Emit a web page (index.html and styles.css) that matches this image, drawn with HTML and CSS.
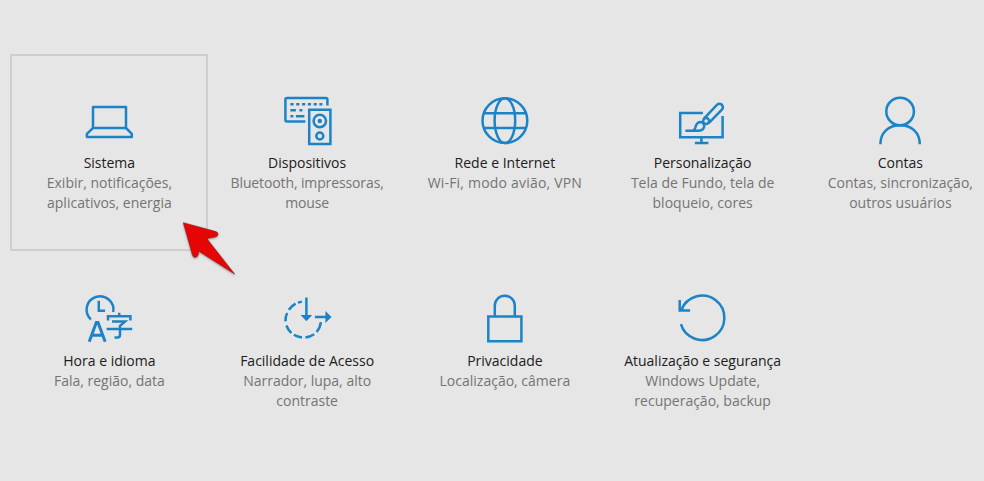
FILE: index.html
```html
<!DOCTYPE html>
<html lang="pt-BR">
<head>
    <meta charset="UTF-8">
    <meta name="viewport" content="width=device-width, initial-scale=1.0">
    <title>Configurações</title>
    <link rel="stylesheet" href="styles.css">
</head>
<body>
    <main class="settings">
        <a class="tile selected">
            <svg class="icon" viewBox="-0.5 0 70 65">
                <path d="M18.5 22H51.5V43H18.5ZM18.5 43L12.4 48.8V51.9H57.3V48.8L51.5 43" stroke-linejoin="round"/>
            </svg>
            <h2>Sistema</h2>
            <p>Exibir, notificações,<br>aplicativos, energia</p>
            <svg class="arrow" viewBox="0 0 56 56">
                <path d="M3.3 2.7L35.8 11.6Q38.2 12.3 37.9 14.4Q37.5 16.6 35 17L26.8 18.6L54.6 54L18.8 31.2L18.2 34.8Q17.4 37.3 15 37.3Q12.9 37.3 12.3 34.5Z"/>
            </svg>
        </a>
        <a class="tile">
            <svg class="icon" viewBox="-3.4 0 70 65">
                <path d="M30 36.6H11.5Q10 36.6 10 35.1V14.5Q10 13 11.5 13H50.5Q52 13 52 14.5V20.5"/>
                <path d="M15 19.3H47" stroke-dasharray="3.2 2.6"/>
                <path d="M15 25.3H20.5M24 25.3H27M15 31.3H18M20.5 31.3H29"/>
                <path d="M33.8 24.8H55V59H33.8Z"/>
                <circle cx="44.4" cy="36" r="6.2"/>
                <circle cx="44.4" cy="51" r="3.5"/>
                <circle class="solid" cx="44.4" cy="36" r="2.2"/>
            </svg>
            <h2>Dispositivos</h2>
            <p class="narrow">Bluetooth, impressoras,<br>mouse</p>
        </a>
        <a class="tile">
            <svg class="icon" viewBox="-0.6 0 70 65">
                <circle cx="35.3" cy="35.6" r="22.4"/>
                <ellipse cx="35.3" cy="35.6" rx="10.3" ry="22.4"/>
                <path d="M14.5 28.3H56.2M14.5 43H56.2"/>
            </svg>
            <h2>Rede e Internet</h2>
            <p class="wide">Wi-Fi, modo avião, VPN</p>
        </a>
        <a class="tile">
            <svg class="icon" viewBox="-2.9 0 70 65">
                <path d="M33 28H10.3V52.3H52.7V31M31.5 53V58M25 58H38.5"/>
                <path d="M33.8 33.8L47 19.9Q49.6 17.7 52 19.7Q54 22.2 52 24.6L38.8 38.2"/>
                <circle cx="36.2" cy="36" r="3"/>
                <path d="M15.5 45.7H22Q24.5 45.7 25.3 43Q26.6 37.3 30.2 37Q34.7 37.5 34.3 41.5Q33.5 45.7 28 45.7H22"/>
            </svg>
            <h2>Personalização</h2>
            <p>Tela de Fundo, tela de<br>bloqueio, cores</p>
        </a>
        <a class="tile">
            <svg class="icon" viewBox="-0.1 0 70 65">
                <circle cx="35" cy="26.5" r="13.8"/>
                <path d="M15.3 59.3C15.3 47.5 23.5 40.3 35 40.3S54.7 47.5 54.7 59.3"/>
            </svg>
            <h2>Contas</h2>
            <p>Contas, sincronização,<br>outros usuários</p>
        </a>
        <a class="tile">
            <svg class="icon" viewBox="-1 -2 70 65">
                <path d="M15.9 34.5A13.4 13.4 0 1 1 38.2 27"/>
                <path d="M23.8 15.8V25.8H30"/>
                <path d="M14.2 56.8L21.3 37.5H23L30.2 56.8M16.8 50.3H27.6" stroke-width="3"/>
                <path d="M33 35.5V31.3H55.4V35.5M44.2 27.8V31.3M37 36.6H50L45 40.8V50Q45 52.4 42.5 52.4H39.5M31.6 44H57.2"/>
            </svg>
            <h2>Hora e idioma</h2>
            <p>Fala, região, data</p>
        </a>
        <a class="tile">
            <svg class="icon" viewBox="-3.4 -2 70 65">
                <path d="M26.5 16.6L22.5 17.6M20.2 18.6Q16 21 13.4 24.7M11.8 28Q9.9 31.5 10.1 36.4M11 40.5Q12.4 44.7 16 48M18.5 49.8Q22 52 26.6 52.4M30 52.4Q34.5 52 38.8 49.2M41.2 47Q44.8 43 45.5 37.2"/>
                <path d="M31 12.5V33M39.5 32H53"/>
                <path class="solid" d="M25.2 30H36.8L31 36.2ZM50 26V38L56.2 32Z"/>
            </svg>
            <h2>Facilidade de Acesso</h2>
            <p>Narrador, lupa, alto<br>contraste</p>
        </a>
        <a class="tile">
            <svg class="icon" viewBox="-0.6 -2 70 65">
                <path d="M18.7 31.5H51.8V56.2H18.7ZM25.2 31V20.5A10 9.7 0 0 1 45.2 20.5V31"/>
            </svg>
            <h2>Privacidade</h2>
            <p>Localização, câmera</p>
        </a>
        <a class="tile">
            <svg class="icon" viewBox="-2.9 -2 70 65">
                <path d="M11 39.2A22.2 22.2 0 1 0 11.4 25.2M9.8 15V25.4H20.2"/>
            </svg>
            <h2>Atualização e segurança</h2>
            <p>Windows Update,<br>recuperação, backup</p>
        </a>
    </main>
</body>
</html>
```

FILE: styles.css
```css
body {
    margin: 0;
    height: 481px;
    overflow: hidden;
    background-color: #e6e6e6;
    font-family: "Open Sans", "Noto Sans", sans-serif;
}
.settings {
    display: grid;
    grid-template-columns: repeat(5, 197.75px);
    grid-auto-rows: 198px;
    padding: 54px 0 0 10px;
}
.tile {
    position: relative;
    box-sizing: border-box;
    height: 197px;
    padding-top: 29px;
    border: 2px solid transparent;
    display: flex;
    flex-direction: column;
    align-items: center;
    text-align: center;
}
.selected {
    border-color: #cecece;
}
.icon {
    width: 70px;
    height: 65px;
    flex-shrink: 0;
    fill: none;
    stroke: #1c83c6;
    stroke-width: 2.5;
}
.solid {
    fill: #1c83c6;
    stroke: none;
}
h2 {
    margin: 3px 0 0;
    padding-left: 1px;
    font-size: 14px;
    font-weight: 400;
    line-height: 20px;
    color: #202020;
    white-space: nowrap;
}
p {
    margin: 0;
    padding-left: 1px;
    font-size: 14px;
    line-height: 20px;
    color: #747474;
    white-space: nowrap;
}
.narrow {
    letter-spacing: -0.12px;
}
.wide {
    letter-spacing: 0.2px;
}
.arrow {
    position: absolute;
    left: 168px;
    top: 164px;
    width: 56px;
    height: 56px;
    fill: #e60505;
    stroke: #8c1a1a;
    stroke-width: 0.6;
    filter: drop-shadow(0 1px 1px rgba(0, 0, 0, 0.35));
}
```
